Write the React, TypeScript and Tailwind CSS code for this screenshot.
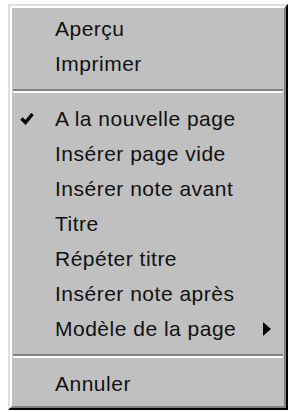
const items: (string | null)[] = [
  "Aperçu",
  "Imprimer",
  null,
  "A la nouvelle page",
  "Insérer page vide",
  "Insérer note avant",
  "Titre",
  "Répéter titre",
  "Insérer note après",
  "Modèle de la page",
  null,
  "Annuler",
];

function Check() {
  return (
    <svg width="14" height="13" viewBox="0 0 14 13" className="block">
      <path d="M1.5 6.5 L5.5 10.5 L12.5 2" fill="none" stroke="#000" strokeWidth="3.4" />
    </svg>
  );
}

export default function App() {
  return (
    <div className="w-[293px] h-[412px] bg-white pt-[4px] pl-[8px]">
      <div className="w-[280px] h-[406px] border-2 border-t-[#dfdfdf] border-l-[#dfdfdf] border-r-black border-b-black">
        <div className="h-full border-2 border-t-white border-l-white border-r-[#808080] border-b-[#808080] bg-[#c0c0c0] pt-[3px] font-['Liberation_Sans',Arial,sans-serif] text-[21px] tracking-[0.5px] text-[#111]">
          {items.map((label, i) =>
            label === null ? (
              <div key={i} className="h-[20px] flex flex-col justify-center px-[1px]">
                <div className="h-[2px] bg-[#808080]" />
                <div className="h-[2px] bg-white" />
              </div>
            ) : (
              <div key={i} className="h-[35px] flex items-center">
                <div className="w-[43px] flex justify-end pr-[21px]">
                  {label === "A la nouvelle page" && <Check />}
                </div>
                <span className="flex-1 whitespace-nowrap">{label}</span>
                {label === "Modèle de la page" && (
                  <svg width="8" height="14" viewBox="0 0 8 14" className="mr-[13px]">
                    <path d="M0 0 L8 7 L0 14 Z" fill="#000" />
                  </svg>
                )}
              </div>
            )
          )}
        </div>
      </div>
    </div>
  );
}
